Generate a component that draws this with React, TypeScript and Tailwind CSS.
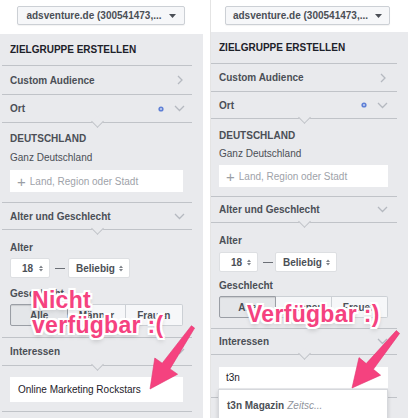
import React from "react";

const BG = "bg-[#e9eaed]";

function Dropdown({ w }: { w: string }) {
  return (
    <div
      className={`${w} h-[19px] border border-[#ccd0d5] rounded-[2px] bg-[#f6f7f9] flex items-center justify-center gap-[7px] text-[10px] font-bold text-[#4b4f56] shadow-[0_1px_1px_rgba(0,0,0,0.05)]`}
    >
      <span>adsventure.de (300541473,...</span>
      <svg width="7" height="4" viewBox="0 0 7 4">
        <path d="M0 0h7L3.5 4z" fill="#4b4f56" />
      </svg>
    </div>
  );
}

function Divider({ notch }: { notch?: boolean }) {
  return (
    <div className="relative z-10 h-px bg-[#c0c3c8]">
      {notch && (
        <div className="absolute left-1/2 top-[-5px] ml-[-4.5px] w-[9px] h-[9px] rotate-45 bg-[#e9eaed] border-r border-b border-[#c0c3c8]" />
      )}
    </div>
  );
}

function ChevronRight() {
  return (
    <svg width="6" height="10" viewBox="0 0 6 10">
      <path d="M1 1l4 4-4 4" fill="none" stroke="#b5b9c0" strokeWidth="1.3" />
    </svg>
  );
}

function ChevronDown() {
  return (
    <svg width="11" height="7" viewBox="0 0 11 7">
      <path d="M1 1l4.5 4.5L10 1" fill="none" stroke="#b5b9c0" strokeWidth="1.3" />
    </svg>
  );
}

function Dot() {
  return (
    <svg width="6" height="6" viewBox="0 0 6 6">
      <circle cx="3" cy="3" r="2.6" fill="#5f80d6" />
      <circle cx="3" cy="3" r="1" fill="#c9d5f2" />
    </svg>
  );
}

function Row({
  h,
  label,
  children,
  pr,
}: {
  h: string;
  label: string;
  children?: React.ReactNode;
  pr: string;
}) {
  return (
    <div className={`${h} ${pr} flex items-center justify-between pl-[8px]`}>
      <span className="text-[10px] font-bold text-[#4b4f56]">{label}</span>
      <div className="flex items-center gap-[10px]">{children}</div>
    </div>
  );
}

function UpDown() {
  return (
    <svg width="4" height="7" viewBox="0 0 4 7">
      <path d="M0 3L2 0.5 4 3z M0 4L2 6.5 4 4z" fill="#7d8188" />
    </svg>
  );
}

function Select({ w, text, pl }: { w: string; text: string; pl: string }) {
  return (
    <div
      className={`${w} ${pl} h-[20px] bg-white border border-[#dddfe2] rounded-[2px] flex items-center justify-between pr-[6px] text-[10px] font-bold text-[#4b4f56]`}
    >
      <span>{text}</span>
      <UpDown />
    </div>
  );
}

function Segmented({ w }: { w: string }) {
  return (
    <div className={`${w} h-[22px] flex text-[10px] font-bold text-[#4b4f56]`}>
      <div className="flex-1 flex items-center justify-center bg-[#e4e6e9] border border-[#9a9ea5] rounded-l-[2px] shadow-[inset_0_1px_1px_rgba(0,0,0,0.12)]">
        Alle
      </div>
      <div className="flex-1 flex items-center justify-center bg-[#f6f7f9] border-y border-r border-[#ccd0d5]">
        Männer
      </div>
      <div className="flex-1 flex items-center justify-center bg-[#f6f7f9] border-y border-r border-[#ccd0d5] rounded-r-[2px]">
        Frauen
      </div>
    </div>
  );
}

function Label({ children, mt }: { children: React.ReactNode; mt?: string }) {
  return (
    <div className={`${mt ?? ""} text-[10px] leading-[12px] font-bold text-[#4b4f56]`}>
      {children}
    </div>
  );
}

function Placeholder({ w }: { w: string }) {
  return (
    <div
      className={`${w} h-[22px] bg-white flex items-center pl-[7px] gap-[4px] text-[10px] text-[#9ea2a9]`}
    >
      <span className="text-[15px] leading-[13px] text-[#9a9ea5]">+</span>
      <span>Land, Region oder Stadt</span>
    </div>
  );
}

const overlayText =
  "absolute font-bold text-[23px] leading-[25px] text-[#f5427f] tracking-[0.3px] [text-shadow:0_0_2px_#fff,1px_1px_0_#fff,-1px_-1px_0_#fff,1px_-1px_0_#fff,-1px_1px_0_#fff,2px_0_0_#fff,-2px_0_0_#fff,0_2px_0_#fff,0_-2px_0_#fff,2px_2px_0_#fff,-2px_-2px_0_#fff,2px_-2px_0_#fff,-2px_2px_0_#fff,0_3px_5px_rgba(0,0,0,0.25)]";

export default function App() {
  return (
    <div className="relative w-[411px] h-[418px] bg-white overflow-hidden flex font-['Liberation_Sans',Arial,sans-serif]">
      {/* LEFT PANEL */}
      <div className="w-[203px] flex flex-col">
        <div className="h-[34px] pt-[6px] pl-[17px]">
          <Dropdown w="w-[168px]" />
        </div>
        <div className={`flex-1 ${BG} pl-[2px]`}>
          <div className="w-[190px]">
            <div className="h-[31px] flex items-center pl-[8px] text-[10px] font-bold text-[#1d2129]">
              ZIELGRUPPE ERSTELLEN
            </div>
            <Divider />
            <Row h="h-[28px]" label="Custom Audience" pr="pr-[9px]">
              <ChevronRight />
            </Row>
            <Divider />
            <Row h="h-[27px]" label="Ort" pr="pr-[7px]">
              <Dot />
              <ChevronDown />
            </Row>
            <Divider notch />
            <div className="pt-[10px] pb-[10px] px-[8px]">
              <Label>DEUTSCHLAND</Label>
              <div className="mt-[7px] text-[10px] leading-[12px] text-[#4b4f56]">
                Ganz Deutschland
              </div>
              <div className="mt-[6px]">
                <Placeholder w="w-[173px]" />
              </div>
            </div>
            <Divider />
            <Row h="h-[26px]" label="Alter und Geschlecht" pr="pr-[7px]">
              <ChevronDown />
            </Row>
            <Divider notch />
            <div className="pt-[12px] pb-[11px] px-[8px]">
              <Label>Alter</Label>
              <div className="mt-[4px] flex items-center">
                <Select w="w-[40px]" text="18" pl="pl-[11px]" />
                <div className="w-[10px] h-px bg-[#6b6f76] ml-[5px] mr-[3px]" />
                <Select w="w-[62px]" text="Beliebig" pl="pl-[7px]" />
              </div>
              <Label mt="mt-[10px]">Geschlecht</Label>
              <div className="mt-[4px]">
                <Segmented w="w-[173px]" />
              </div>
            </div>
            <Divider />
            <Row h="h-[27px]" label="Interessen" pr="pr-[7px]">
              <ChevronDown />
            </Row>
            <Divider notch />
            <div className="pt-[11px] pb-[9px] px-[8px]">
              <div className="w-[173px] h-[25px] bg-white flex items-center pl-[8px] text-[10px] text-[#1d2129]">
                Online Marketing Rockstars
              </div>
            </div>
            <Divider />
          </div>
        </div>
      </div>

      <div className="w-[7px]" />

      {/* RIGHT PANEL */}
      <div className="w-[198px] flex flex-col border-l border-[#e4e4e4]">
        <div className="h-[32px] pt-[6px] pl-[14px]">
          <Dropdown w="w-[165px]" />
        </div>
        <div className={`flex-1 ${BG} flex`}>
          <div className="w-[186px]">
            <div className="h-[31px] flex items-center pl-[8px] text-[10px] font-bold text-[#1d2129]">
              ZIELGRUPPE ERSTELLEN
            </div>
            <Divider />
            <Row h="h-[27px]" label="Custom Audience" pr="pr-[11px]">
              <ChevronRight />
            </Row>
            <Divider />
            <Row h="h-[26px]" label="Ort" pr="pr-[9px]">
              <Dot />
              <ChevronDown />
            </Row>
            <Divider notch />
            <div className="pt-[11px] pb-[9px] px-[8px]">
              <Label>DEUTSCHLAND</Label>
              <div className="mt-[6px] text-[10px] leading-[12px] text-[#4b4f56]">
                Ganz Deutschland
              </div>
              <div className="mt-[5px]">
                <Placeholder w="w-[169px]" />
              </div>
            </div>
            <Divider />
            <Row h="h-[25px]" label="Alter und Geschlecht" pr="pr-[9px]">
              <ChevronDown />
            </Row>
            <Divider notch />
            <div className="pt-[12px] pb-[10px] px-[8px]">
              <Label>Alter</Label>
              <div className="mt-[5px] flex items-center">
                <Select w="w-[39px]" text="18" pl="pl-[11px]" />
                <div className="w-[10px] h-px bg-[#6b6f76] ml-[5px] mr-[2px]" />
                <Select w="w-[62px]" text="Beliebig" pl="pl-[7px]" />
              </div>
              <Label mt="mt-[8px]">Geschlecht</Label>
              <div className="mt-[4px]">
                <Segmented w="w-[169px]" />
              </div>
            </div>
            <Divider />
            <Row h="h-[25px]" label="Interessen" pr="pr-[9px]">
              <ChevronDown />
            </Row>
            <Divider notch />
            <div className="relative pt-[12px] pb-[9px] px-[8px]">
              <div className="w-[169px] h-[21px] bg-white flex items-center pl-[7px] text-[10px] text-[#1d2129]">
                t3n
              </div>
            </div>
            <Divider />
          </div>
          <div className="flex-1" />
        </div>
      </div>
      <div className="w-[3px]" />

      {/* Suggestion dropdown */}
      <div className="absolute left-[218px] top-[389px] w-[170px] h-[32px] bg-white border border-[#d6d8dc] shadow-[0_2px_4px_rgba(0,0,0,0.15)] z-20 flex items-start pt-[8px] pl-[8px] text-[10px]">
        <span className="font-bold text-[#4b4f56]">t3n Magazin</span>
        <span className="italic text-[#90949c] ml-[3px]">Zeitsc...</span>
      </div>

      {/* Overlays */}
      <div className={`${overlayText} left-[32px] top-[288px] z-30`}>
        <div>Nicht</div>
        <div>verfügbar :(</div>
      </div>
      <div className={`${overlayText} left-[247px] top-[302px] z-30`}>Verfügbar :)</div>

      <svg
        className="absolute inset-0 z-30 pointer-events-none"
        width="411"
        height="418"
        viewBox="0 0 411 418"
      >
        <polygon
          points="191.4,325.7 162.2,363.2 154.8,358.0 150,389 177.6,374.2 170.0,368.9 194.6,328.1"
          fill="#f5427f"
          stroke="#e23570"
          strokeWidth="0.6"
          strokeLinejoin="round"
        />
        <polygon
          points="396.3,330.5 366.2,363.6 359.0,357.6 352,388 380.6,375.2 373.4,369.3 399.6,333.4"
          fill="#f5427f"
          stroke="#e23570"
          strokeWidth="0.6"
          strokeLinejoin="round"
        />
      </svg>
    </div>
  );
}
